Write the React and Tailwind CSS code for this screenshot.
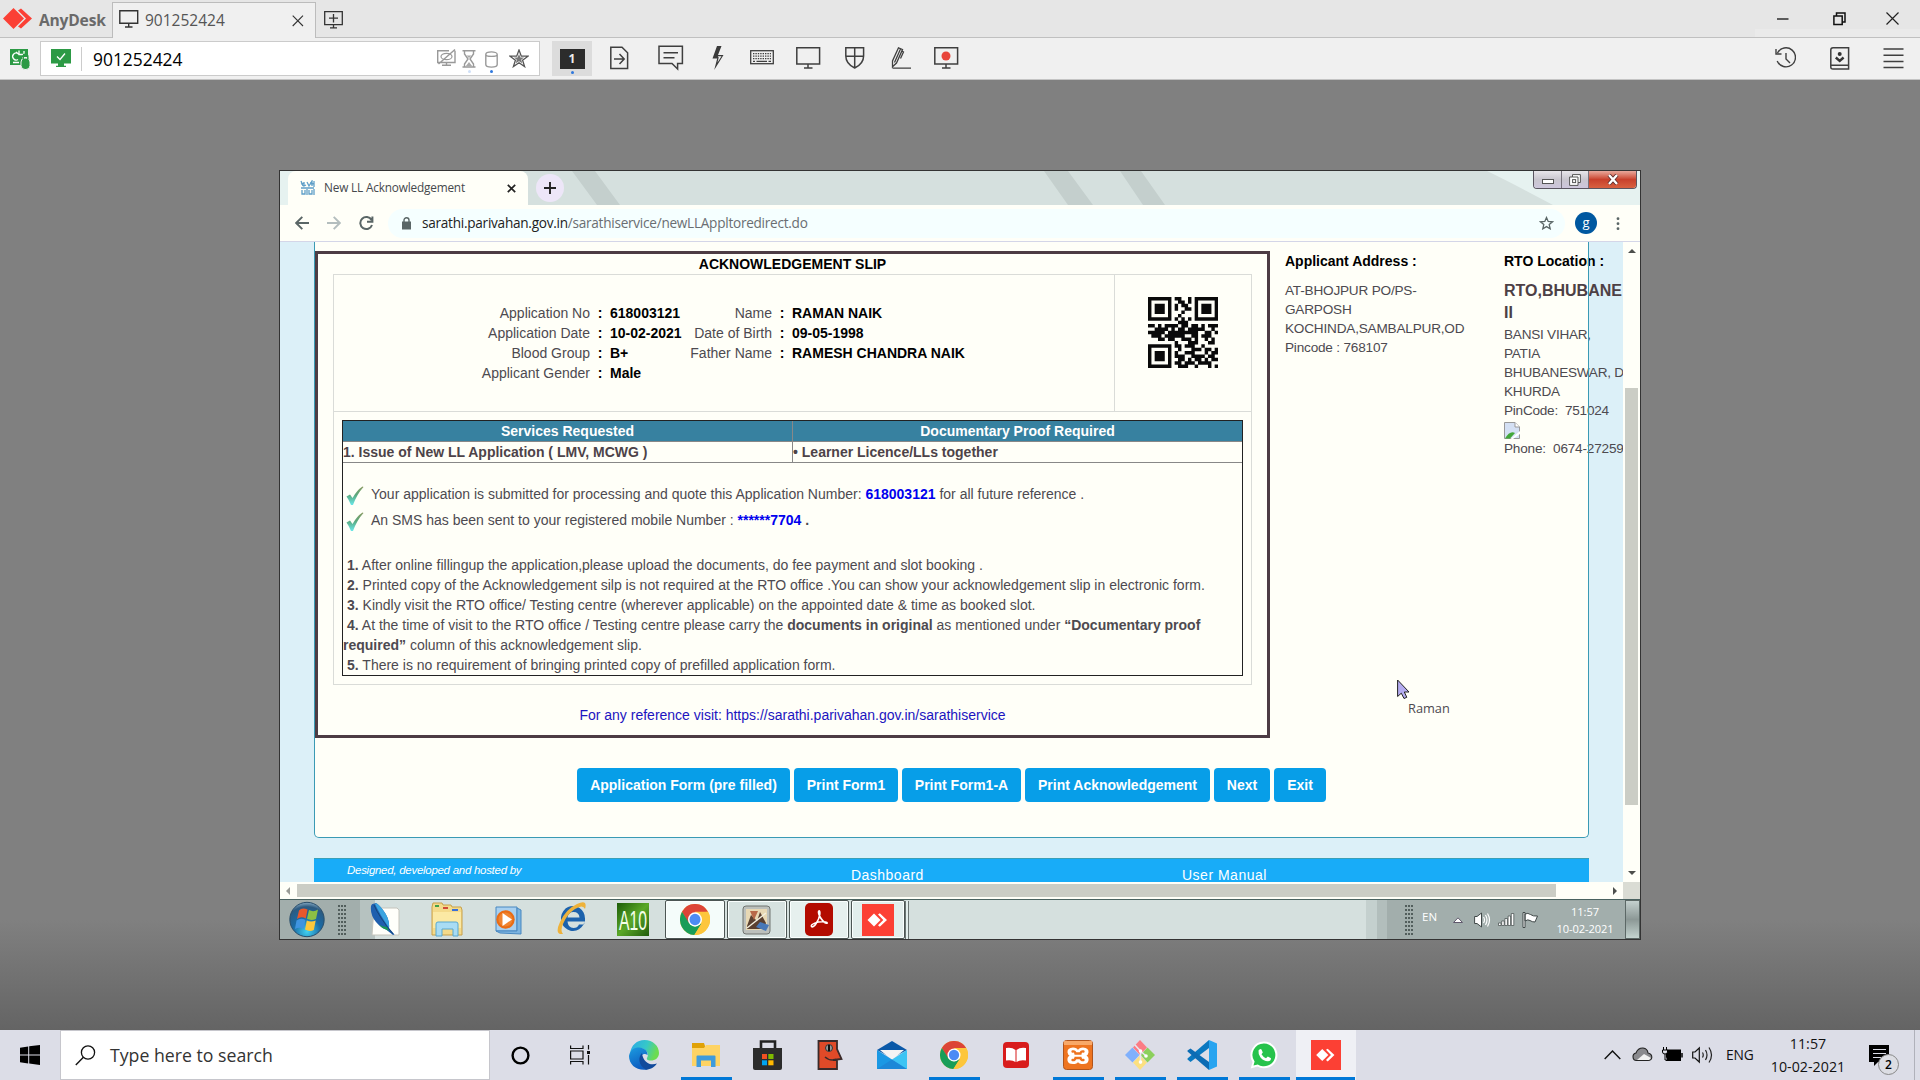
import React from "react";

function Ico({ w, h, className = "", children }) {
  return (
    <svg width={w} height={h} viewBox={`0 0 ${w} ${h}`} fill="none" className={`block shrink-0 ${className}`}>
      {children}
    </svg>
  );
}

/* ---------- shared logos ---------- */
function Chrome({ w, h }) {
  return (
    <svg width={w} height={h} viewBox="0 0 48 48" preserveAspectRatio="none" className="block shrink-0">
      <circle cx="24" cy="24" r="24" fill="#fbc43a" />
      <path d="M3.2 12A24 24 0 0 1 44.8 12L24 13.5 13.6 30Z" fill="#dc4437" />
      <path d="M3.2 12A24 24 0 0 0 23 48L34.4 30 24 35 14.5 29.5Z" fill="#199d58" />
      <path d="M44.8 12H24L34.4 30 23 48A24 24 0 0 0 44.8 12Z" fill="#fdc63c" />
      <circle cx="24" cy="24" r="11.2" fill="#fff" />
      <circle cx="24" cy="24" r="8.8" fill="#4c8bf5" />
    </svg>
  );
}

function AnyDeskTile({ w, h }) {
  return (
    <svg width={w} height={h} viewBox="0 0 32 32" preserveAspectRatio="none" className="block shrink-0">
      <rect width="32" height="32" fill="#fc4034" />
      <path d="M5.5 16L12 9.5 18.5 16 12 22.5Z" fill="#fff" />
      <path d="M16 10.5L17.8 9.2 25 16 17.8 22.8 16 21.3 21.3 16Z" fill="#fff" />
    </svg>
  );
}

function Folder({ w, h }) {
  return (
    <svg width={w} height={h} viewBox="0 0 28 24" preserveAspectRatio="none" className="block shrink-0">
      <path d="M0 0H12L13 3V8H0Z" fill="#e0a106" />
      <path d="M0 5H12L14 2H28V23H0Z" fill="#fed364" />
      <path d="M4.5 13.5Q4.5 12.5 5.5 12.5H22.5Q23.5 12.5 23.5 13.5V24H19V17.5H9V24H4.5Z" fill="#3f9bdc" />
    </svg>
  );
}

/* ---------- host window chrome ---------- */
function TitleBar() {
  return (
    <div className="flex h-[38px] w-full border-b border-[#c0c0c0] bg-[#e6e6e6]">
      <div className="flex h-[38px] w-[112px] shrink-0 items-start pl-[3px] pt-[8px]">
        <Ico w={30} h={22}>
          <path d="M0 10.5L10.5 0 21 10.5 10.5 21Z" fill="#fb4035" />
          <path d="M15 2.5L18 0.5 29 10.5 18 20.5 15 18.5 23 10.5Z" fill="#fb4035" />
        </Ico>
        <span className="ml-[6px] text-[15.6px] font-bold leading-[24px] tracking-[-0.2px] text-[#6a6a6a]">AnyDesk</span>
      </div>
      <div className="mt-[2px] flex h-[36px] w-[204px] shrink-0 border border-b-0 border-[#bcbcbc] bg-[#f0f0f0] pl-[6px] pt-[7px]">
        <Ico w={20} h={19}>
          <path d="M0.8 0.8H18.7V13.2H0.8ZM9.7 13.5V16.5M6 17H13.5" stroke="#333" strokeWidth="1.4" />
        </Ico>
        <span className="ml-[6px] w-[147px] text-[15.5px] leading-[21px] text-[#555]">901252424</span>
        <Ico w={12} h={12} className="mt-[5px]">
          <path d="M0.7 0.7L11 11M11 0.7L0.7 11" stroke="#333" strokeWidth="1.1" />
        </Ico>
      </div>
      <Ico w={19} h={18} className="ml-[8px] mt-[11px]">
        <path d="M0.7 0.7H18.3V13.7H0.7ZM9.5 3V11.5M5 7.2H14M9.5 14V16.5M6 16.8H13" stroke="#333" strokeWidth="1.3" />
      </Ico>
      <div className="ml-auto flex h-[37px] w-[165px] flex-col">
        <div className="flex h-[29px] w-full items-start pl-[22px] pt-[12px]">
          <Ico w={12} h={13}>
            <path d="M0 7H11.5" stroke="#111" strokeWidth="1.3" />
          </Ico>
          <Ico w={13} h={14} className="ml-[44px]">
            <path d="M0.9 3.9H9.2V12.6H0.9ZM3.5 3.5V0.9H12V10H9.5" stroke="#111" strokeWidth="1.5" />
          </Ico>
          <Ico w={13} h={13} className="ml-[40px]">
            <path d="M0.5 0.5L12.5 12.5M12.5 0.5L0.5 12.5" stroke="#222" strokeWidth="1.2" />
          </Ico>
        </div>
        <div className="h-[8px] w-full bg-[#eaeaea]" />
      </div>
    </div>
  );
}

function ToolBar() {
  const s = { stroke: "#3f3f3f", strokeWidth: 1.5 };
  return (
    <div className="flex h-[42px] w-full items-start border-b border-[#c4c4c4] bg-[#f0f0f0] pt-[3px]">
      <Ico w={22} h={22} className="ml-[9px] mt-[7px]">
        <path d="M1 1H19V9H13V17H1Z" fill="#2c9a45" />
        <path d="M9 5.500A3.500 3.500 0 1 0 9 11.500M4 14.500H10M10 2.500V6.500H14M10 6.500L7 4M15 3V6" stroke="#fff" strokeWidth="1.3" />
        <rect x="12" y="10" width="9" height="11.500" rx="4" fill="#2c9a45" stroke="#f0f0f0" />
        <path d="M14.200 11V8.500A2.300 2.300 0 0 1 18.800 8.500V11" stroke="#2c9a45" strokeWidth="1.5" />
      </Ico>
      <div className="ml-[9px] flex h-[35px] w-[500px] items-start border border-[#cbcbcb] bg-white">
        <Ico w={20} h={18} className="ml-[10px] mt-[7px]">
          <path d="M0 0H20V14.5H0ZM7 14.5H13V17.5H7ZM5 16.8H15V18H5Z" fill="#2c9a45" />
          <path d="M6 7.5L9 10.5 14 4.5" stroke="#fff" strokeWidth="1.3" />
        </Ico>
        <div className="ml-[10px] mt-[5px] h-[24px] w-px bg-[#ccc]" />
        <span className="ml-[11px] w-[344px] text-[17.4px] leading-[35px] text-black">901252424</span>
        <Ico w={20} h={18} className="mt-[7px]">
          <path d="M18 1.700V13.500H0.700V1.700H12M9.500 13.500V16M5 16.300H14M1.500 15L18 0.500" stroke="#999" strokeWidth="1.4" />
          <ellipse cx="9.500" cy="7.500" rx="5.500" ry="3.200" stroke="#999" strokeWidth="1.2" />
        </Ico>
        <div className="ml-[5px] mt-[8px] flex w-[14px] flex-col items-center">
          <Ico w={14} h={18}>
            <path d="M0.5 0.8H13.5M0.5 17H13.5M2.5 1V4L6 9 2.5 14V17M11.5 1V4L8 9 11.5 14V17" stroke="#999" strokeWidth="1.4" />
            <path d="M3.500 16.500L7 12 10.500 16.500ZM4.500 5.500H9.500L7 8Z" fill="#aaa" />
          </Ico>
          <div className="mt-[2px] h-[3px] w-[3px] rounded-full bg-[#cfe0f8]" />
        </div>
        <div className="ml-[8px] mt-[9px] flex w-[14px] flex-col items-center">
          <Ico w={13} h={17}>
            <path d="M0.8 3.5V13.5C0.8 17 12.2 17 12.2 13.5V3.5C12.2 0 0.8 0 0.8 3.5C0.8 6 12.2 6 12.2 3.5" stroke="#999" strokeWidth="1.4" />
          </Ico>
          <div className="mt-[2px] h-[3px] w-[3px] rounded-full bg-[#2f78dd]" />
        </div>
        <Ico w={20} h={19} className="ml-[11px] mt-[7px]">
          <path d="M10 1L12.3 7.2H19L13.6 11.2 15.6 17.6 10 13.8 4.4 17.6 6.4 11.2 1 7.2H7.7Z" stroke="#555" strokeWidth="1.300" />
          <path d="M10 5L11.400 8.500H15L12.200 10.800 13.300 14.300 10 12.300 6.700 14.300 7.800 10.800 5 8.500H8.600Z" fill="#777" />
        </Ico>
      </div>
      <div className="ml-[12px] flex h-[35px] w-[40px] flex-col items-center bg-[#dcdcdc] pt-[8px]">
        <div className="flex h-[20px] w-[25px] items-center justify-center bg-[#2c2c2c] text-[12px] font-bold leading-none text-[#eee]">1</div>
        <div className="mt-[2px] h-[3px] w-[3px] rounded-full bg-[#2f78dd]" />
      </div>
      <Ico w={19} h={24} className="ml-[18px] mt-[5px]">
        <path d="M0.8 1.2H12L17.6 6.8V22.4H0.8ZM4 13H14M9.5 8L14.2 13 9.5 18" {...s} />
      </Ico>
      <Ico w={26} h={26} className="ml-[29px] mt-[4px]">
        <path d="M1 1.2H24.4V18.5H19.6V24L14 18.5H1ZM5.5 7.7H20M5.5 12.7H16.5" {...s} />
      </Ico>
      <Ico w={13} h={25} className="ml-[28px] mt-[5px]">
        <path d="M5 0H9.500L6 9H11.500L2.2 24 5.2 12.5H0.5Z" fill="#3a3a3a" />
        <path d="M5.8 10.2H9.5L5.5 16.5 6.7 11.5Z" fill="#f0f0f0" />
      </Ico>
      <Ico w={24} h={15} className="ml-[25px] mt-[9px]">
        <rect x="0.7" y="0.7" width="22.6" height="13" {...s} strokeWidth="1.3" />
        <path d="M3 3.7H21M3 6.2H21M3 8.7H21" stroke="#3f3f3f" strokeWidth="1.3" strokeDasharray="1.4 1" />
        <path d="M3 11.3H5M6.5 11.3H17M18.5 11.3H21" stroke="#3f3f3f" strokeWidth="1.2" />
      </Ico>
      <Ico w={25} h={23} className="ml-[22px] mt-[6px]">
        <path d="M0.8 0.8H23.6V17H0.8ZM12 17V21M8 21H16.5" {...s} />
      </Ico>
      <Ico w={20} h={22} className="ml-[24px] mt-[6px]">
        <path d="M0.8 0.8H18.6V9C18.6 15 15 18.5 9.7 21 4.4 18.5 0.8 15 0.8 9ZM9.7 1V20.5M0.8 9.3H18.6" {...s} />
      </Ico>
      <Ico w={21} h={23} className="ml-[26px] mt-[6px]">
        <path d="M7.5 0.8L11.500 2.500 5.500 16 1.5 19.8 1.5 14ZM9.500 2L3.500 15.500M11 4L12.500 5 9.500 11.500M1.5 21.2H20" stroke="#3f3f3f" strokeWidth="1.3" />
      </Ico>
      <Ico w={25} h={23} className="ml-[22px] mt-[6px]">
        <path d="M0.8 0.8H23.6V17H0.8ZM12 17V21M8 21H16.5" {...s} />
        <circle cx="12" cy="9" r="4.5" fill="#e8443a" />
      </Ico>
      <div className="ml-auto flex pr-[16px] pt-[6px]">
        <Ico w={22} h={22}>
          <path d="M3.500 6A9.5 9.5 0 1 1 3.200 14M2 2V7H7.500M12 6V12L16 16" {...s} strokeWidth="1.4" />
        </Ico>
        <Ico w={20} h={23} className="ml-[34px]">
          <path d="M3 0.8H18.6V22H3Q0.8 22 0.8 20V3Q0.8 0.8 3 0.8ZM0.8 18.2H18.6" {...s} />
          <circle cx="9.7" cy="7" r="2" fill="#333" />
          <path d="M5.8 10.5L9.7 14 13.6 10.5" stroke="#333" strokeWidth="2.4" />
        </Ico>
        <Ico w={21} h={22} className="ml-[33px]">
          <path d="M0.5 2H20.5M0.5 8.2H20.5M0.5 14.4H20.5M0.5 20.6H20.5" {...s} />
        </Ico>
      </div>
    </div>
  );
}

/* ---------- remote browser ---------- */
function TabStrip() {
  return (
    <div className="relative h-[34px] w-full overflow-hidden bg-[#d5e0de]">
      <Ico w={1360} h={34} className="absolute left-0 top-0">
        <path d="M0 0H20V34H0Z" fill="#e6f2f0" />
        <path d="M292 0H315L340 34H317ZM764 0H788L813 34H788ZM840 0H861L885 34H863Z" fill="#c4cfcd" />
        <path d="M1207 0Q1230 11 1273 34H1360V0Z" fill="#e6f2f0" />
      </Ico>
      <div className="relative flex h-full items-start">
        <div className="ml-[8px] flex h-[34px] w-[240px] items-start rounded-t-[8px] bg-[#fffff8] pl-[12px]">
          <Ico w={15} h={16} className="mt-[9px]">
            <path d="M1 1L3 6M4 2V6L6 5M7 2L9 6L12 1V6M14 1V7M1 8H14M2 10V14H5V10M7 9V15M9 10V14H12V10M14 9V15M1 4L4 3M10 3L14 4" stroke="#5f9fc8" strokeWidth="1.3" />
          </Ico>
          <span className="ml-[9px] w-[183px] whitespace-nowrap text-[11.8px] leading-[33px] tracking-[-0.17px] text-[#45484c]">New LL Acknowledgement</span>
          <Ico w={9} h={9} className="mt-[13px]">
            <path d="M0.8 0.8L8.2 8.2M8.2 0.8L0.8 8.2" stroke="#222" strokeWidth="1.7" />
          </Ico>
        </div>
        <div className="ml-[8px] mt-[3px] flex h-[28px] w-[28px] items-center justify-center rounded-full bg-[#ede6f8]">
          <Ico w={12} h={12}>
            <path d="M6 0V12M0 6H12" stroke="#222" strokeWidth="1.9" />
          </Ico>
        </div>
        <div className="ml-auto mr-[3px] flex h-[18px] w-[104px] overflow-hidden rounded-b-[4px] border border-t-0 border-[#5a5560]">
          <div className="flex w-[28px] items-end justify-center border-r border-[#77727c] bg-linear-to-b from-[#e8e6ea] via-[#c9c6ce] to-[#cdc6dc] pb-[4px]">
            <div className="h-[5px] w-[12px] border border-[#555] bg-white" />
          </div>
          <div className="flex w-[27px] items-center justify-center border-r border-[#77727c] bg-linear-to-b from-[#e8e6ea] via-[#c9c6ce] to-[#cdc6dc]">
            <Ico w={12} h={12}>
              <path d="M3.5 0.6H11.4V8.5H9V11.4H0.6V3H3.5Z" fill="#fff" stroke="#555" />
              <path d="M3.500 3H9V8.500" stroke="#555" />
              <rect x="3.6" y="5.6" width="3" height="3" fill="#fff" stroke="#555" />
            </Ico>
          </div>
          <div className="flex grow items-center justify-center bg-linear-to-b from-[#e8a89c] via-[#c8402c] to-[#d86040]">
            <Ico w={12} h={11}>
              <path d="M2 1L10 10M10 1L2 10" stroke="#5a2a2a" strokeWidth="4" />
              <path d="M2 1L10 10M10 1L2 10" stroke="#fff" strokeWidth="2.4" />
            </Ico>
          </div>
        </div>
      </div>
    </div>
  );
}

function AddressBar() {
  return (
    <div className="flex h-[37px] w-full items-start border-b border-[#d4d6e8] bg-[#fffff8] pt-[4px]">
      <Ico w={14} h={14} className="ml-[15px] mt-[7px]">
        <path d="M14 7H1.5M7.3 0.8L1.2 7L7.3 13.2" stroke="#5a6666" strokeWidth="1.9" />
      </Ico>
      <Ico w={14} h={14} className="ml-[18px] mt-[7px]">
        <path d="M0 7H12.5M6.7 0.8L12.8 7L6.7 13.2" stroke="#b4bebe" strokeWidth="1.9" />
      </Ico>
      <Ico w={15} h={15} className="ml-[18px] mt-[7px]">
        <path d="M12.5 4A6 6 0 1 0 13 9M13.4 0.5V5.8H8" stroke="#5a6666" strokeWidth="2" />
      </Ico>
      <div className="ml-[14px] flex h-[29px] w-[1177px] rounded-full bg-[#f5ffff] pl-[14px]">
        <Ico w={9} h={13} className="mt-[8px]">
          <path d="M0 4.5H9V12.5H0Z" fill="#5a6666" />
          <path d="M2 5V3.2A2.5 2.5 0 0 1 7 3.2V5" stroke="#5a6666" strokeWidth="1.4" />
        </Ico>
        <span className="ml-[11px] w-[1117px] whitespace-nowrap text-[13.6px] leading-[28px] tracking-[-0.26px] text-[#6a6e72]">
          <span className="text-[#222]">sarathi.parivahan.gov.in</span>/sarathiservice/newLLAppltoredirect.do
        </span>
        <Ico w={15} h={14} className="mt-[7px]">
          <path d="M7.5 1.5L9.2 5.4 13.5 5.8 10.2 8.6 11.2 12.8 7.5 10.6 3.8 12.8 4.8 8.6 1.5 5.8 5.8 5.4Z" stroke="#5a6666" strokeWidth="1.3" />
        </Ico>
      </div>
      <div className="ml-[10px] mt-[3px] flex h-[22px] w-[22px] items-center justify-center rounded-full bg-[#0058a0] pb-[2px] text-[13px] leading-none text-white">g</div>
      <Ico w={4} h={14} className="ml-[19px] mt-[8px]">
        <circle cx="2" cy="1.7" r="1.4" fill="#5a6666" />
        <circle cx="2" cy="6.7" r="1.4" fill="#5a6666" />
        <circle cx="2" cy="11.7" r="1.4" fill="#5a6666" />
      </Ico>
    </div>
  );
}

const QR = [
  "111111101100101111111",
  "100000100110101000001",
  "101110101011001011101",
  "101110101001101011101",
  "101110100010001011101",
  "100000100100001000001",
  "111111101010101111111",
  "000000000111000000000",
  "110101111011011010111",
  "001111010110111110010",
  "111110111111111001101",
  "011101111110011011100",
  "000110110011101001010",
  "000000001000111000110",
  "111111101101110010000",
  "100000100100011101101",
  "101110101001110001011",
  "101110101110011110110",
  "101110100110101101011",
  "100000101101110111100",
  "111111100111001000101",
];

function QrCode() {
  const d = QR.flatMap((row, y) => [...row].map((c, x) => (c === "1" ? `M${x} ${y}h1.03v1.03h-1.03z` : ""))).join("");
  return (
    <svg width="70" height="71" viewBox="0 0 21 21" preserveAspectRatio="none" className="block">
      <path d={d} fill="#0a0a0a" />
    </svg>
  );
}

function Fields({ items, labelW, valueW }) {
  return (
    <div className="flex">
      <div className={labelW}>
        {items.map(([l]) => (
          <div key={l} className="flex h-[20px]">
            <span className="grow whitespace-nowrap text-right">{l}</span>
            <b className="w-[20px] shrink-0 text-center text-black">:</b>
          </div>
        ))}
      </div>
      <div className={valueW}>
        {items.map(([l, v]) => (
          <div key={l} className="h-[20px] whitespace-nowrap font-bold text-black">{v}</div>
        ))}
      </div>
    </div>
  );
}

function CheckMark() {
  return (
    <Ico w={18} h={20}>
      <path d="M0.500 10.500L4 8.500 6.500 12Q11 4 16.500 0.500L17.500 1Q11 8 7 19L5 19Q3 14 0.500 10.500Z" fill="url(#ck)" />
      <defs>
        <linearGradient id="ck" x1="0" y1="0" x2="0" y2="1">
          <stop offset="0" stopColor="#8a9a62" />
          <stop offset="0.45" stopColor="#5aa87c" />
          <stop offset="1" stopColor="#6ae8ea" />
        </linearGradient>
      </defs>
    </Ico>
  );
}

function Slip() {
  return (
    <div className="h-[487px] w-[955px] shrink-0 border-[3px] border-[#4d3c44] text-[14px] leading-[20px]">
      <div className="h-[20px] text-center font-bold leading-[21px] text-black">ACKNOWLEDGEMENT SLIP</div>
      <div className="ml-[15px] h-[411px] w-[919px] border border-[#dadcd8]">
        <div className="flex h-[137px] border-b border-[#dadcd8]">
          <div className="flex w-[781px] border-r border-[#dadcd8] pt-[28px]">
            <Fields
              labelW="w-[276px]"
              valueW="w-[76px]"
              items={[
                ["Application No", "618003121"],
                ["Application Date", "10-02-2021"],
                ["Blood Group", "B+"],
                ["Applicant Gender", "Male"],
              ]}
            />
            <Fields
              labelW="w-[106px]"
              valueW="w-[200px]"
              items={[
                ["Name", "RAMAN NAIK"],
                ["Date of Birth", "09-05-1998"],
                ["Father Name", "RAMESH CHANDRA NAIK"],
              ]}
            />
          </div>
          <div className="flex grow justify-center pt-[22px]">
            <QrCode />
          </div>
        </div>
        <div className="ml-[8px] mt-[8px] h-[256px] w-[901px] border border-[#222]">
          <div className="grid h-[21px] grid-cols-[449px_1fr] border-b border-[#888] bg-[#3781a0] text-center font-bold leading-[21px] text-white">
            <div>Services Requested</div>
            <div className="border-l border-[#888]">Documentary Proof Required</div>
          </div>
          <div className="grid h-[21px] grid-cols-[449px_1fr] border-b border-[#888] font-bold leading-[21px] text-[#4d4348]">
            <div>1. Issue of New LL Application ( LMV, MCWG )</div>
            <div className="border-l border-[#888]">• Learner Licence/LLs together</div>
          </div>
          <div className="mt-[23px] flex h-[26px] items-start pl-[3px]">
            <CheckMark />
            <span className="ml-[7px] -mt-[2px]">
              Your application is submitted for processing and quote this Application Number: <b className="text-[#0000ee]">618003121</b> for all future reference .
            </span>
          </div>
          <div className="flex h-[26px] items-start pl-[3px]">
            <CheckMark />
            <span className="ml-[7px] -mt-[2px]">
              An SMS has been sent to your registered mobile Number : <b><span className="text-[#0000ee]">******7704</span> .</b>
            </span>
          </div>
          <div className="mt-[17px] whitespace-nowrap">
            <div className="pl-[4px]"><b>1.</b> After online fillingup the application,please upload the documents, do fee payment and slot booking .</div>
            <div className="pl-[4px]"><b>2.</b> Printed copy of the Acknowledgement silp is not required at the RTO office .You can show your acknowledgement slip in electronic form.</div>
            <div className="pl-[4px]"><b>3.</b> Kindly visit the RTO office/ Testing centre (wherever applicable) on the appointed date &amp; time as booked slot.</div>
            <div className="pl-[4px]"><b>4.</b> At the time of visit to the RTO office / Testing centre please carry the <b>documents in original</b> as mentioned under <b>“Documentary proof</b></div>
            <div><b>required”</b> column of this acknowledgement slip.</div>
            <div className="pl-[4px]"><b>5.</b> There is no requirement of bringing printed copy of prefilled application form.</div>
          </div>
        </div>
      </div>
      <div className="mt-[20px] text-center text-[#1c14c0]">For any reference visit: https://sarathi.parivahan.gov.in/sarathiservice</div>
    </div>
  );
}

function Btn({ className, children }) {
  return (
    <div className={`flex h-[34px] items-center justify-center whitespace-nowrap rounded-[4px] bg-[#079ee8] text-[14px] font-bold text-white ${className}`}>
      {children}
    </div>
  );
}

function Page() {
  return (
    <div className="relative h-[640px] w-[1343px] shrink-0 overflow-hidden bg-[#dcf0f8] font-['Liberation_Sans',Arial,sans-serif] text-[#4d4a50]">
      <div className="ml-[34px] h-[596px] w-[1275px] rounded-b-[5px] border border-t-0 border-[#3a9ab4] bg-[#fffff8]">
        <div className="flex h-[488px] pt-[9px]">
          <Slip />
          <div className="ml-[15px] w-[219px] shrink-0 text-[13.6px] leading-[19px]">
            <div className="pb-[10px] pt-[1px] text-[14px] font-bold text-black">Applicant Address :</div>
            <div className="whitespace-nowrap tracking-[-0.2px]">AT-BHOJPUR PO/PS-<br />GARPOSH<br />KOCHINDA,SAMBALPUR,OD<br />Pincode : 768107</div>
          </div>
          <div className="w-[119px] shrink-0 whitespace-nowrap text-[13.6px] leading-[19px]">
            <div className="pb-[10px] pt-[1px] text-[14px] font-bold text-black">RTO Location :</div>
            <div className="-mt-[1px] mb-[1px] text-[16px] font-bold leading-[22px] text-[#4d4045]">RTO,BHUBANE<br />II</div>
            <div className="tracking-[-0.25px]">BANSI VIHAR,<br />PATIA<br />BHUBANESWAR, D<br />KHURDA<br />PinCode:&nbsp; 751024</div>
            <div className="h-[19px] pt-[2px]">
              <Ico w={16} h={17}>
                <path d="M0.5 0.5H11L15.5 5V16.5H0.5Z" fill="#d4e0f4" stroke="#999" />
                <path d="M11 0.5V5H15.5" fill="#fff" stroke="#999" />
                <path d="M1 16.5Q6 8 11 11L6 16.5Z" fill="#43a83a" />
                <path d="M16 9L6.5 17H9L16 12Z" fill="#fff" />
              </Ico>
            </div>
            <div className="tracking-[-0.2px]">Phone:&nbsp; 0674-27259</div>
          </div>
        </div>
        <div className="ml-[262px] mt-[38px] flex gap-[4px]">
          <Btn className="w-[213px]">Application Form (pre filled)</Btn>
          <Btn className="w-[104px]">Print Form1</Btn>
          <Btn className="w-[119px]">Print Form1-A</Btn>
          <Btn className="w-[185px]">Print Acknowledgement</Btn>
          <Btn className="w-[56px]">Next</Btn>
          <Btn className="w-[52px]">Exit</Btn>
        </div>
      </div>
      <div className="ml-[34px] mt-[20px] flex h-[24px] w-[1275px] whitespace-nowrap border-t border-[#3aa0b8] bg-[#18acf8] text-[14px] text-white">
        <span className="ml-[33px] w-[504px] text-[11.5px] italic leading-[22px] tracking-[-0.28px]">Designed, developed and hosted by</span>
        <span className="w-[331px] leading-[33px] tracking-[0.48px]">Dashboard</span>
        <span className="leading-[33px] tracking-[0.5px]">User Manual</span>
      </div>
      <Ico w={14} h={21} className="absolute left-[1117px] top-[437px]">
        <path d="M0.6 1V17.5L4.3 14.2 7 19.5 9.8 18.3 7.3 13H12Z" fill="#b4acf0" stroke="#222" />
      </Ico>
      <div className="absolute left-[1128px] top-[457px] font-['Open_Sans',sans-serif] text-[12.8px] leading-[18px] text-[#4d4a50]">Raman</div>
      <div className="absolute left-[1308px] top-0 h-[590px] w-px bg-[#3a9ab4]" />
    </div>
  );
}

function Browser() {
  return (
    <div className="h-[728px] w-full bg-[#fffff8]">
      <TabStrip />
      <AddressBar />
      <div className="flex h-[640px]">
        <Page />
        <div className="flex h-[640px] w-[17px] flex-col items-center">
          <Ico w={8} h={4} className="mt-[7px]"><path d="M0 4L4 0 8 4Z" fill="#4d4f4c" /></Ico>
          <div className="mt-[135px] h-[417px] w-[13px] bg-[#cbcdc5]" />
          <Ico w={8} h={4} className="mt-[66px]"><path d="M0 0H8L4 4Z" fill="#4d4f4c" /></Ico>
        </div>
      </div>
      <div className="flex h-[17px] items-center">
        <Ico w={4} h={8} className="ml-[6px]"><path d="M4 0L0 4 4 8Z" fill="#9a9c96" /></Ico>
        <div className="ml-[7px] h-[13px] w-[1259px] bg-[#cbcdc5]" />
        <Ico w={4} h={8} className="ml-[57px]"><path d="M0 0L4 4 0 8Z" fill="#4d4f4c" /></Ico>
        <div className="ml-auto h-[17px] w-[17px] bg-[#dadcd4]" />
      </div>
    </div>
  );
}

function Grip() {
  return (
    <div className="grid grid-cols-3 gap-x-[1px] gap-y-[2px]">
      {Array.from({ length: 24 }, (_, i) => (
        <div key={i} className="h-[2px] w-[2px] bg-[#525e5c]" />
      ))}
    </div>
  );
}

function RemoteButton({ className = "", children }) {
  return (
    <div className={`flex h-[39px] shrink-0 items-center justify-center rounded-[2px] border border-[#4c5654] shadow-[inset_0_0_0_1px_#fafffe] ${className}`}>
      {children}
    </div>
  );
}

function RemoteTaskbar() {
  return (
    <div className="flex h-[40px] w-full items-center border-t border-[#4a6260] bg-[#d5e0de]">
      <div className="flex h-[39px] w-[80px] shrink-0 items-center bg-[#a2aeac]">
        <svg width="36" height="37" viewBox="0 0 36 36" className="ml-[9px] block">
          <defs>
            <radialGradient id="orb" cx="0.5" cy="0.85" r="0.9">
              <stop offset="0" stopColor="#40d0f0" />
              <stop offset="0.45" stopColor="#1a6aa4" />
              <stop offset="0.8" stopColor="#2c5a80" />
              <stop offset="1" stopColor="#a8c8dc" />
            </radialGradient>
          </defs>
          <circle cx="18" cy="18" r="17.2" fill="url(#orb)" stroke="#2a4e6a" />
          <path d="M10 9Q13 5.500 18.500 8L16.8 17Q12 14.500 8 17.500Z" fill="#e8582c" />
          <path d="M20 8.500Q24.500 11 29 8L27 17.500Q22 19.500 18 17.3Z" fill="#8cc044" />
          <path d="M7.500 19Q12 16 16.300 18.500L14.800 27.500Q10.5 25 6 27.500Z" fill="#3f94e0" />
          <path d="M17.8 19Q22 21.200 26.700 19L24.800 28.500Q20.5 30.5 16 28Z" fill="#fcc83c" />
        </svg>
        <div className="ml-[13px]"><Grip /></div>
      </div>
      <div className="h-[39px] w-[15px] shrink-0 bg-[#b6c2c0]" />
      <Ico w={32} h={34} className="-ml-[5px]">
        <path d="M4 5H27L29 7V32H2Z" fill="#fffffa" stroke="#c4c4bc" />
        <path d="M1 3Q0 12 6 19T16 26.500L23 32 24.500 31.500 19 25Q20 16 13 7T5 0.500Q1.500 0 1 3Z" fill="#1f5fae" />
        <path d="M5 1Q9 10 19 25Q20 16 13 7T5 1Z" fill="#3aa4e0" />
        <path d="M9 21.500Q12 25.500 16 26.500L19 28 17 24Q12 23.500 9 21.500Z" fill="#1c9a50" />
        <path d="M4 2Q9 14 23 31" stroke="#123c6a" strokeWidth="0.8" />
      </Ico>
      <Ico w={33} h={35} className="ml-[29px]">
        <path d="M1 5L2 1H11L12 3H20L21 5H30L31 8V33H1Z" fill="#f4da8a" stroke="#c8a048" />
        <path d="M4 3H8V5H4Z" fill="#3fa048" /><path d="M12 5H17V7H12Z" fill="#d04838" /><path d="M21 7H27V9H21Z" fill="#3a70d8" />
        <path d="M2 10H30V26H2Z" fill="#fbe9a4" />
        <path d="M5 34V22Q5 20 7 20H25Q27 20 27 22V34H22V27H11V34Z" fill="#a8dcf4" stroke="#58a8d0" />
      </Ico>
      <Ico w={28} h={30} className="ml-[31px]">
        <path d="M1 2H22V26H1Z" fill="#a8d0f0" stroke="#4888c0" /><path d="M22 3L26 5V29L5 28 1 26H22Z" fill="#7cb4e0" stroke="#4888c0" />
        <circle cx="10.5" cy="14.5" r="9.2" fill="#ea6c14" /><circle cx="10.5" cy="14.5" r="7" fill="#f08430" />
        <path d="M7.500 8L17 14.500 7.500 21Z" fill="#fff" />
      </Ico>
      <Ico w={31} h={37} className="ml-[34px]">
        <path d="M27.500 21A12 12.500 0 1 1 28 17.500V20.500H10.500Q11 27 16.500 27 20.500 27 22 23.500H27ZM10.5 16.500H22.500Q22 11 16.500 11 11.500 11 10.5 16.500Z" fill="#1c62ac" fillRule="evenodd" />
        <path d="M6 33Q-3 34 3 21T20 3T28 8Q26 3 18 8T6 23Q3 30 6 33Z" fill="#eeb23a" />
      </Ico>
      <svg width="32" height="33" viewBox="0 0 32 33" className="ml-[29px] block shrink-0">
        <defs>
          <linearGradient id="aten" x1="0" y1="0" x2="1" y2="1"><stop offset="0" stopColor="#1c5c08" /><stop offset="0.5" stopColor="#5aa828" /><stop offset="1" stopColor="#205c0c" /></linearGradient>
        </defs>
        <rect width="32" height="33" fill="url(#aten)" />
        <text x="2" y="27" textLength="28" lengthAdjust="spacingAndGlyphs" fill="#f4ffe8" fontSize="27" fontFamily="Liberation Sans, sans-serif">A10</text>
      </svg>
      <RemoteButton className="ml-[16px] w-[60px] bg-[#f4fcfa]"><Chrome w={30} h={31} /></RemoteButton>
      <RemoteButton className="ml-[2px] w-[60px] bg-[#d6e2e0]">
        <Ico w={30} h={30}>
          <rect x="1" y="1" width="27" height="28" rx="3" fill="#bcc0bc" stroke="#707470" />
          <rect x="4" y="4" width="21" height="21" fill="#e8d8b4" />
          <path d="M5 21L9 10 15 16 18 7 24 18 22 24H5Z" fill="#5a4030" /><path d="M8 6H16L12 15Z" fill="#b86848" />
          <path d="M14 22L18 17 27 20 24 26Z" fill="#4878b8" /><path d="M5 23L24 8" stroke="#f4f0e0" strokeWidth="1.4" />
        </Ico>
      </RemoteButton>
      <RemoteButton className="ml-[2px] w-[60px] bg-[#e6f0ee]">
        <Ico w={28} h={33}>
          <rect width="28" height="33" rx="5" fill="#b30b00" />
          <path d="M6.500 23.500C5 21.500 12 18 20.500 19C25 20 20 23 14.500 13C12 7 15.500 6 14.800 11.500C14 17 8.500 26 6.500 23.500Z" stroke="#fff" strokeWidth="1.6" />
        </Ico>
      </RemoteButton>
      <RemoteButton className="ml-[2px] w-[54px] bg-[#e2eeec]"><AnyDeskTile w={32} h={32} /></RemoteButton>
      <div className="h-[38px] w-[4px] shrink-0 border-x border-[#6c7674] bg-[#e2eeec]" />
      <div className="ml-auto flex h-[39px] shrink-0 text-white">
        <div className="w-[11px] bg-[#c4d0ce]" />
        <div className="w-[10px] bg-[#b2bebc]" />
        <div className="relative flex w-[238px] items-center bg-[#a2aeac] pl-[18px]">
          <Grip />
          <span className="-mt-[6px] ml-[9px] w-[16px] text-[11.5px]">EN</span>
          <Ico w={10} h={6} className="ml-[15px]"><path d="M0.5 5.5L5 0.8 9.500 5.500Z" fill="#fff" stroke="#60586c" /></Ico>
          <Ico w={17} h={16} className="ml-[11px]">
            <path d="M0.600 4.500H3L7.500 1V15L3 11.500H0.600Z" fill="#fff" stroke="#404848" />
            <path d="M9.500 5Q11.500 8 9.500 11M11.500 3Q14.500 8 11.500 13M13.500 1.500Q17.500 8 13.500 14.500" stroke="#fff" strokeWidth="1.2" />
          </Ico>
          <Ico w={17} h={13} className="ml-[7px]">
            <path d="M0.500 10H3V12.500H0.500ZM3.700 8H6.200V12.500H3.700ZM6.900 5.500H9.400V12.500H6.900ZM10.100 3H12.600V12.500H10.100ZM13.300 0.500H15.800V12.500H13.300Z" fill="#fff" stroke="#404848" strokeWidth="0.700" />
          </Ico>
          <Ico w={17} h={16} className="ml-[7px]">
            <path d="M1 0.500H3V15.500H1ZM3 2Q6 0.500 8.500 2.500T15.500 4L13 10Q10 10 8 8.500T3 9Z" fill="#fff" stroke="#404848" />
          </Ico>
          <div className="ml-[14px] flex w-[64px] flex-col items-center whitespace-nowrap text-[11.1px] leading-[17px] tracking-[-0.1px]">
            <span>11:57</span>
            <span>10-02-2021</span>
          </div>
        </div>
        <div className="w-[15px] border border-[#5c6866] bg-linear-to-b from-[#c4d0ce] via-[#8c9896] to-[#c4d4d0]" />
      </div>
    </div>
  );
}

/* ---------- host taskbar ---------- */
function Slot({ running, active, children }) {
  return (
    <div className={`flex h-[50px] shrink-0 flex-col items-center ${active ? "ml-[1px] w-[60px] bg-[#eff0f5] pr-[1px]" : "w-[62px]"}`}>
      <div className="flex h-[47px] items-center justify-center pt-[3px]">{children}</div>
      {running && <div className={`h-[3px] bg-[#0078d7] ${active ? "w-[59px]" : "w-[51px]"}`} />}
    </div>
  );
}

function HostTaskbar() {
  return (
    <div className="flex h-[50px] w-full items-start bg-[#dcdde7]">
      <div className="flex h-[50px] w-[60px] items-center justify-center">
        <Ico w={20} h={20}>
          <path d="M0 2.800L8.200 1.500V9.400H0ZM9.200 1.300L20 0V9.400H9.200ZM0 10.400H8.200V18.400L0 17.200ZM9.200 10.400H20V20L9.200 18.600Z" fill="#000" />
        </Ico>
      </div>
      <div className="flex h-[50px] w-[430px] items-center border border-[#c6c6cc] bg-white pl-[14px]">
        <Ico w={21} h={21}>
          <circle cx="13" cy="7.500" r="6.600" stroke="#111" strokeWidth="1.300" />
          <path d="M8.400 12.300L0.800 20" stroke="#111" strokeWidth="1.400" />
        </Ico>
        <span className="ml-[14px] whitespace-nowrap text-[17.700px] text-[#333]">Type here to search</span>
      </div>
      <div className="ml-[21px] flex h-[50px] items-center">
        <Ico w={19} h={19}><circle cx="9.500" cy="9.500" r="7.900" stroke="#000" strokeWidth="2.400" /></Ico>
        <Ico w={21} h={20} className="ml-[40px]">
          <path d="M0.600 0.500V3.500H13V0.500M0.600 19.500V16.500H13V19.500M0.600 6H13V14H0.600ZM18.500 0V4.500M18.500 10V19.500" stroke="#111" strokeWidth="1.200" />
          <path d="M17 6H20V9H17Z" fill="#111" />
        </Ico>
      </div>
      <div className="ml-[22px] flex">
        <Slot>
          <svg width="30" height="30" viewBox="0 0 30 30" className="block">
            <defs>
              <linearGradient id="edA" x1="0" y1="0" x2="1" y2="0.3"><stop offset="0" stopColor="#2aa8e8" /><stop offset="0.6" stopColor="#36c8c8" /><stop offset="1" stopColor="#6cdc50" /></linearGradient>
              <linearGradient id="edB" x1="0" y1="0" x2="0.4" y2="1"><stop offset="0" stopColor="#1c9ce0" /><stop offset="1" stopColor="#0c5cc0" /></linearGradient>
            </defs>
            <path d="M1 14C2 5 8 0 15.500 0 24 0 30 6 30 13 30 18 26 20.500 22 20.500 18 20.500 17 19 18.500 17 20 13 17 9 12 8 7 7.500 3 10 1 14Z" fill="url(#edA)" />
            <path d="M0 16C1 10 5 7.500 10 7.500 16 7.500 19 12 18.500 15 14 12 10 17 11.500 22 13 26 16 29 19 29.500 8 31.500 0 25 0 16Z" fill="url(#edB)" />
            <path d="M13 13C9 17 9 25 17 29.800 22 29.500 26 26.500 28 23.500 22 26 14 23 13 13Z" fill="#114a9c" />
          </svg>
        </Slot>
        <Slot running><Folder w={28} h={24} /></Slot>
        <Slot>
          <Ico w={31} h={30}>
            <path d="M8 9V1.500H22V9" stroke="#222" strokeWidth="2.600" />
            <path d="M0 8H29V28Q29 30 27 30H2Q0 30 0 28Z" fill="#2c2c2c" />
            <path d="M9 14H14V19H9Z" fill="#f25022" /><path d="M15.300 14H20.500V19H15.300Z" fill="#7fba00" />
            <path d="M9 20.300H14V25.300H9Z" fill="#00a4ef" /><path d="M15.300 20.300H20.500V25.300H15.300Z" fill="#ffb900" />
          </Ico>
        </Slot>
        <Slot>
          <Ico w={26} h={30}>
            <path d="M1.500 1H20V9L24.500 19 16 20H20V29H1.500Z" fill="#e04a28" stroke="#3a2a2a" strokeWidth="1.800" />
            <circle cx="12" cy="8" r="3.500" fill="#9a9a98" stroke="#333" /><path d="M12 5V11" stroke="#111" strokeWidth="2" />
            <path d="M8 17Q12 21 19 19.500" stroke="#3a2a2a" strokeWidth="1.500" />
          </Ico>
        </Slot>
        <Slot>
          <Ico w={30} h={28}>
            <path d="M0 9L15 0 30 9 15 17Z" fill="#0a58a8" />
            <path d="M3 9H27L15 19Z" fill="#f4f4f4" />
            <path d="M0 9L30 28H0Z" fill="#1a98e4" /><path d="M30 9V28H28L15 18.500Z" fill="#3cc4f4" /><path d="M0 28L15 18.500 30 28Z" fill="#1c88d8" />
          </Ico>
        </Slot>
        <Slot running><Chrome w={28} h={28} /></Slot>
        <Slot>
          <Ico w={26} h={26}>
            <rect width="26" height="26" rx="4" fill="#d81c1c" />
            <path d="M3 6Q9 5 12.500 8V20Q9 17.500 3 18.500ZM23 6Q17 5 13.500 8V20Q17 17.500 23 18.500Z" fill="#fff" />
          </Ico>
        </Slot>
        <Slot running>
          <Ico w={30} h={30}>
            <rect x="0.500" y="0.500" width="29" height="29" rx="3" fill="#ee7420" stroke="#b0541c" />
            <path d="M1 1H29V5H1Z" fill="#f8a868" />
            <path d="M10 7.500Q14 7.500 15 10Q16 7.500 20 7.500Q26 8 25.500 12.500Q25 15 23.500 15.500Q26 17 25.500 20.500 25 24 20 24 16 24 15 22 14 24 10 24 5 24 4.500 20.500 4 17 6.500 15.500 5 15 4.500 12.500 4 8 10 7.500Z" fill="#fff" />
            <path d="M9.500 11.500Q12 11 12.500 13.500H17.500Q18 11 20.500 11.500M9.500 20Q12 20.500 12.500 18H17.500Q18 20.500 20.500 20" stroke="#ee7420" strokeWidth="2.300" strokeLinecap="round" />
          </Ico>
        </Slot>
        <Slot running>
          <Ico w={30} h={30}>
            <path d="M15 0L22 7.500 15 15 8 7.500Z" fill="#fb7c84" /><path d="M22.500 7.500L30 15 22.500 22.500 15.500 15Z" fill="#8cd05c" />
            <path d="M7.500 7.500L14.500 15 7.500 22.500 0 15Z" fill="#80b0fc" /><path d="M15 15.500L22 22.500 15 30 8 22.500Z" fill="#fce080" />
            <path d="M10 5L15.500 11V24M15.500 11L21 16" stroke="#e8e8f0" strokeWidth="1.600" />
            <circle cx="15.500" cy="11" r="1.800" fill="#fff" /><circle cx="21" cy="16" r="1.800" fill="#fff" /><circle cx="15.500" cy="22" r="1.800" fill="#fff" />
          </Ico>
        </Slot>
        <Slot running>
          <Ico w={30} h={30}>
            <path d="M22 0L22 8 3.500 22 0.500 19.500V18.500Z" fill="#0a78c0" />
            <path d="M22 30V22L3.500 8.500 0.500 10.500V11.500Z" fill="#0c6cb4" />
            <path d="M22 0L30 3.500V26.500L22 30Z" fill="#28a4f0" />
          </Ico>
        </Slot>
        <Slot running>
          <Ico w={28} h={28}>
            <path d="M14 0.500A13.400 13.400 0 1 1 7.500 25.600L0.700 27.500 2.600 21A13.400 13.400 0 0 1 14 0.500Z" fill="#fff" />
            <path d="M14 2.500A11.400 11.400 0 1 1 7.800 23.500L3.500 24.600 4.600 20.500A11.400 11.400 0 0 1 14 2.500Z" fill="#27c34c" />
            <path d="M8.500 9.500Q10 7 11.500 8.500L12.800 11.500 11.500 13.300Q13 16 16 17.200L17.800 15.500 21 17.200Q21 20 18 20.300 14 20.500 10.500 16.500 8 13 8.500 9.500Z" fill="#fff" />
          </Ico>
        </Slot>
        <Slot running active><AnyDeskTile w={30} h={30} /></Slot>
      </div>
      <div className="ml-auto flex h-[50px] items-start">
        <Ico w={17} h={10} className="mt-[20px]"><path d="M0.700 9L8.500 1 16.300 9" stroke="#111" strokeWidth="1.400" /></Ico>
        <Ico w={21} h={15} className="ml-[11px] mt-[17px]">
          <path d="M4.500 13.500A3.800 3.800 0 0 1 4 6Q6 0.800 11 1 15.500 1.500 16 6 20 7 19.800 10.500 19.500 13.500 16 13.500Z" fill="#8a8a8e" stroke="#222" strokeWidth="1.100" />
          <path d="M5 13L12 7 19 11 17 13Z" fill="#f2f2f2" />
        </Ico>
        <Ico w={21} h={15} className="ml-[9px] mt-[17px]">
          <rect x="4.500" y="3" width="14" height="10.500" fill="#000" stroke="#000" /><path d="M20 6V10.500" stroke="#000" strokeWidth="1.500" />
          <path d="M1.500 0V3M4.500 0V3M0.500 3H5.500V5Q5.500 7 3 7 0.500 7 0.500 5ZM3 7V13H5" stroke="#000" fill="#dcdde7" />
        </Ico>
        <Ico w={22} h={18} className="ml-[9px] mt-[16px]">
          <path d="M0.700 6H3L7.300 2V16L3 12H0.700Z" stroke="#111" strokeWidth="1.200" />
          <path d="M10.500 6.500Q12 9 10.500 11.500M13.500 4Q16.500 9 13.500 14M17 1.500Q22 9 17 16.500" stroke="#222" strokeWidth="1.200" />
        </Ico>
        <span className="ml-[12px] mt-[14px] w-[33px] text-[13.800px] leading-[22px] tracking-[-0.100px] text-[#111]">ENG</span>
        <div className="ml-[11px] flex w-[76px] flex-col items-center whitespace-nowrap pt-[2px] text-[14.200px] leading-[23px] tracking-[0.050px] text-[#111]">
          <span>11:57</span>
          <span>10-02-2021</span>
        </div>
        <div className="relative ml-[23px] mt-[15px] w-[45px]">
          <Ico w={21} h={22}>
            <path d="M0 0H20V17H9L5 21V17H0Z" fill="#000" /><path d="M4 4.500H17M4 8.500H17M4 12.500H12" stroke="#dcdde7" strokeWidth="1.200" />
          </Ico>
          <div className="absolute left-[9px] top-[9px] flex h-[21px] w-[21px] items-center justify-center rounded-full border border-[#888] bg-[#dcdde3] text-[12px] font-semibold leading-none text-black">2</div>
        </div>
        <div className="mr-[5px] h-[50px] w-px bg-[#b0b1ba]" />
      </div>
    </div>
  );
}

export default function App() {
  return (
    <div className="flex h-[1080px] w-[1920px] flex-col overflow-hidden font-['Open_Sans','Noto_Sans',sans-serif]">
      <TitleBar />
      <ToolBar />
      <div className="flex h-[950px] w-full justify-center bg-[linear-gradient(to_bottom,#808080_0,#808080_840px,#646464_950px)] pt-[90px]">
        <div className="h-[770px] w-[1362px] border border-[#333]">
          <Browser />
          <RemoteTaskbar />
        </div>
      </div>
      <HostTaskbar />
    </div>
  );
}
